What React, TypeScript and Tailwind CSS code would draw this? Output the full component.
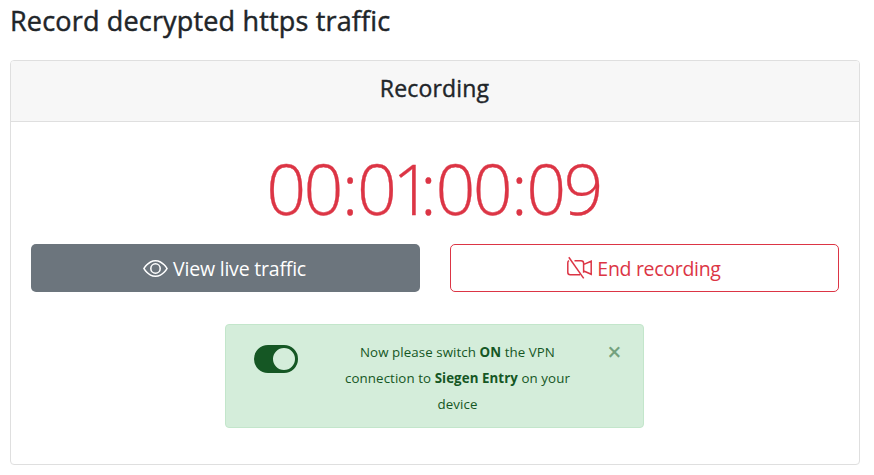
import React from "react";

function EyeIcon() {
  return (
    <svg width="25" height="25" viewBox="0 0 16 16" fill="currentColor" aria-hidden="true">
      <path fillRule="evenodd" d="M16 8s-3-5.5-8-5.5S0 8 0 8s3 5.5 8 5.5S16 8 16 8zM1.173 8a13.134 13.134 0 0 0 1.66 2.043C4.12 11.332 5.88 12.5 8 12.5c2.12 0 3.879-1.168 5.168-2.457A13.134 13.134 0 0 0 14.828 8a13.133 13.133 0 0 0-1.66-2.043C11.879 4.668 10.119 3.5 8 3.5c-2.12 0-3.879 1.168-5.168 2.457A13.133 13.133 0 0 0 1.172 8z" />
      <path fillRule="evenodd" d="M8 5.5a2.5 2.5 0 1 0 0 5 2.5 2.5 0 0 0 0-5zM4.5 8a3.5 3.5 0 1 1 7 0 3.5 3.5 0 0 1-7 0z" />
    </svg>
  );
}

function CameraOffIcon() {
  return (
    <svg width="25" height="25" viewBox="0 0 25 25" fill="none" stroke="currentColor" strokeWidth="1.5" aria-hidden="true">
      <path d="M2 4.7Q.8 5.3.8 6.8V16.2Q.8 18.7 3.2 18.7H13.2M7.5 4.8H14Q16.6 4.8 16.6 7.2V16.7M16.8 8.4 24.2 5.2V18.3L16.8 15" />
      <path d="M1.8 1.2 16.7 22.4" />
    </svg>
  );
}

function ToggleIcon() {
  return (
    <svg width="44" height="28" viewBox="0 0 44 28" aria-hidden="true">
      <path fill="#155724" fillRule="evenodd" d="M14 0h16a14 14 0 0 1 0 28H14a14 14 0 0 1 0-28zm16 3a11 11 0 1 0 0 22 11 11 0 0 0 0-22z" />
    </svg>
  );
}

function Colon() {
  return <span className="ml-[1px] tracking-[-1.4px]">:</span>;
}

export default function App() {
  return (
    <main className="h-[475px] bg-white px-[10px] pt-1 font-['Open_Sans',sans-serif] text-[#212529]">
      <h1 className="h-[34px] text-[27px] leading-[34px] font-medium tracking-[0.17px] whitespace-nowrap [-webkit-text-stroke:0.45px_#212529]">Record decrypted https traffic</h1>
      <section className="mt-[22px] h-[405px] w-[850px] overflow-hidden rounded border border-[#dfdfdf] bg-white">
        <header className="h-[61px] border-b border-[#dfdfdf] bg-[#f7f7f7] text-center">
          <h2 className="pt-[12px] pr-px text-[23px] leading-[30px] font-medium tracking-[0.17px] [-webkit-text-stroke:0.4px_#212529]">Recording</h2>
        </header>
        <div className="flex flex-col items-center px-5">
          <div className="mt-[18px] mr-[3px] h-[96px] text-[70px] leading-[96px] font-light tracking-[-2.7px] text-[#dc3545] [-webkit-text-stroke:0.3px_#dc3545]">
            00<Colon /><span className="tracking-[-4.7px]">0</span><span className="tracking-[-13.2px]">1</span><Colon />00<Colon />09
          </div>
          <div className="mt-[8px] grid w-full grid-cols-2 gap-[30px] text-[19.5px] tracking-[-0.2px]">
            <button className="flex h-12 items-center justify-center gap-[5px] rounded-[5px] bg-[#6c757d] pr-[2px] text-white">
              <EyeIcon />
              <span className="pt-px">View live traffic</span>
            </button>
            <button className="flex h-12 items-center justify-center gap-[5px] rounded-[5px] border border-[#dc3545] pr-px text-[#dc3545]">
              <CameraOffIcon />
              <span className="pt-px tracking-[-0.3px]">End recording</span>
            </button>
          </div>
          <aside className="mt-8 mr-[2px] flex h-[104px] w-[419px] rounded border border-[#c3e6cb] bg-[#d4edda] text-[#155724]">
            <div className="ml-7 mt-5 w-11"><ToggleIcon /></div>
            <p className="ml-[40px] mt-[14px] w-[240px] text-center text-[13.3px] leading-[26px] tracking-[0.08px]">
              Now please switch <strong>ON</strong> the VPN<br />
              connection to <strong>Siegen Entry</strong> on your<br />
              device
            </p>
            <button className="ml-[27px] mt-[12px] h-7 w-5 text-center text-[25px] leading-7 font-semibold text-[#155724]/50" aria-label="Close">×</button>
          </aside>
        </div>
      </section>
    </main>
  );
}
